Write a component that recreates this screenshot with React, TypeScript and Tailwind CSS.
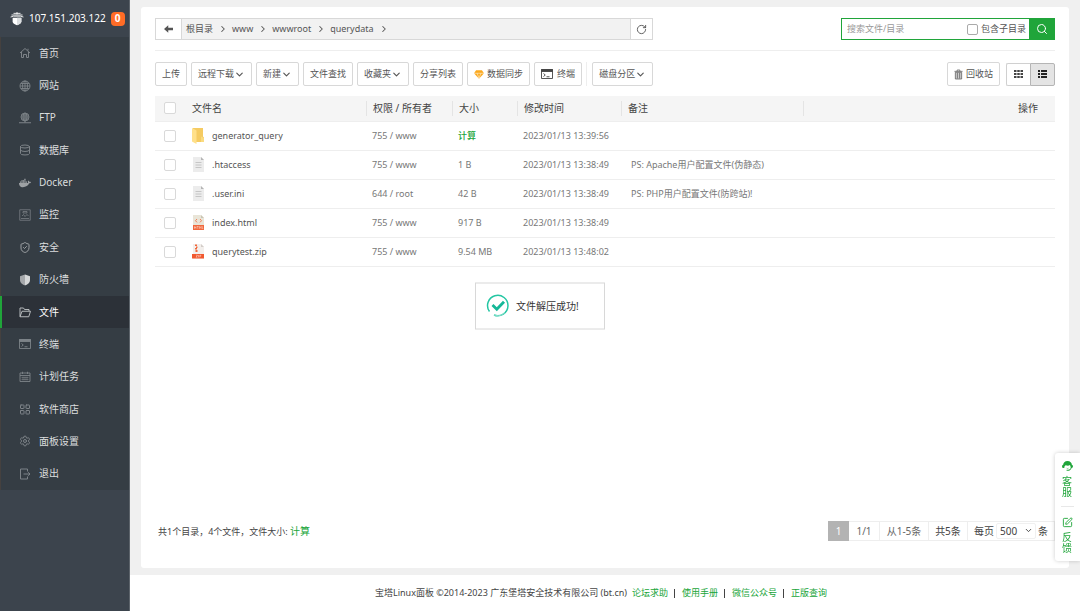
import React, { useState } from 'react'
import {
  ChevronDown,
  ChevronRight,
  Database,
  LayoutGrid,
  RotateCw,
  Search,
  Settings,
  ShieldCheck,
  SquarePen,
} from 'lucide-react'
import { FaDocker } from 'react-icons/fa'

const LogoIcon = () => (
  <svg viewBox="0 0 24 24" className="h-[15px] w-[14px] shrink-0" fill="none" stroke="#fff">
    <path d="M12 1v4M6 3.200h12M2.500 6h19M1 9.500l5-1.500h12l5 1.500" strokeWidth="1.500" />
    <path d="M4.500 10.500h15v6.500c0 3-3.500 5-7.500 6.500-4-1.500-7.500-3.500-7.500-6.500z" fill="#fff" stroke="none" />
    <path d="M12 10.500h7.500v6.500c0 3-3.500 5-7.500 6.500z" fill="#dcdfe1" stroke="none" />
  </svg>
)

const HomeIcon = () => (
  <svg viewBox="0 0 24 24" className="size-3" fill="none" stroke="currentColor" strokeWidth="2">
    <path d="M2 12L12 3l10 9M5 10v11h4v-6h6v6h4V10M18 7V3.500" />
  </svg>
)

const SiteIcon = () => (
  <svg viewBox="0 0 24 24" className="size-3" fill="none" stroke="currentColor" strokeWidth="1.800">
    <circle cx="12" cy="12" r="10" />
    <ellipse cx="12" cy="12" rx="5" ry="10" />
    <path d="M12 2v20M2 12h20M4 7h16M4 17h16" />
  </svg>
)

const FtpIcon = () => (
  <svg viewBox="0 0 24 24" className="size-3" fill="none" stroke="currentColor" strokeWidth="1.800">
    <circle cx="12" cy="10" r="8" />
    <ellipse cx="12" cy="10" rx="4" ry="8" />
    <path d="M4 10h16M5 6h14M5 14h14M12 2v19" />
    <path d="M0 21.500h24M9 21.500h6" strokeWidth="2.200" />
  </svg>
)

const MonitorIcon = () => (
  <svg viewBox="0 0 24 24" className="size-3" fill="none" stroke="currentColor" strokeWidth="1.500">
    <path d="M1.500 1.500h21v21h-21zM4 19h16M6 14l3-3 3 4 4-4 3 3M8 5h8v3H8z" />
  </svg>
)

const FirewallIcon = () => (
  <svg viewBox="0 0 24 24" className="size-3">
    <path d="M12 1L2 4.500V12c0 6 5 9 10 11z" fill="#a5a8ab" />
    <path d="M12 1l10 3.500V12c0 6-5 9-10 11z" fill="#d5d7d8" />
  </svg>
)

const FolderIcon = () => (
  <svg viewBox="0 0 24 22" className="h-[11px] w-3" fill="none" stroke="#c3c6c8" strokeWidth="1.800">
    <path d="M2 19V2h7l2 3h9v3M2 19.500L6 8.500h17l-3.500 11z" />
  </svg>
)

const TerminalIcon = () => (
  <svg viewBox="0 0 24 20" className="h-[10px] w-3" fill="none" stroke="currentColor" strokeWidth="1.800">
    <path d="M1 1h22v18H1z" />
    <path d="M1 1h22v4H1z" fill="currentColor" />
    <path d="M5 9l3.500 3L5 15M11 15.500h6" />
  </svg>
)

const CronIcon = () => (
  <svg viewBox="0 0 24 24" className="size-3" fill="none" stroke="currentColor" strokeWidth="1.800">
    <path d="M2 4h20v17H2zM2 9h20M7 1.500V6M17 1.500V6" />
    <path d="M5 13h14M5 17h14M8 11v8M12 11v8M16 11v8" strokeWidth="1.200" />
  </svg>
)

const ExitIcon = () => (
  <svg viewBox="0 0 24 24" className="size-3" fill="none" stroke="currentColor" strokeWidth="2">
    <path d="M17 7V2H3v20h14v-5M9 12h13M18.500 8.500L22 12l-3.500 3.500" />
  </svg>
)

const ArrowLeftIcon = () => (
  <svg viewBox="0 0 20 16" className="h-2 w-[10px]" fill="#555">
    <path d="M0 8l8.500-7.500V5.500H18v5H8.500v5z" />
  </svg>
)

const DiamondIcon = () => (
  <svg viewBox="0 0 24 20" className="h-[9px] w-[10px]">
    <path d="M5 0h14l5 7-12 13L0 7z" fill="#fca91d" />
    <path d="M0 7h24M7.500 7L12 19l4.500-12" stroke="#fff" strokeWidth="1.200" fill="none" />
  </svg>
)

const TrashIcon = () => (
  <svg viewBox="0 0 20 24" className="h-[11px] w-[9px]" fill="none" stroke="#666" strokeWidth="1.800">
    <path d="M1 5h18M7 5V2h6v3" />
    <path d="M3 7h14v15H3z" fill="#ccc" />
    <path d="M7.500 8v13M12.500 8v13" />
  </svg>
)

const GridViewIcon = () => (
  <svg viewBox="0 0 9 8" className="h-2 w-[9px]" fill="#444">
    <path d="M0 0h2.500v2H0zM3.250 0h2.500v2h-2.500zM6.500 0H9v2H6.500zM0 3h2.500v2H0zM3.250 3h2.500v2h-2.500zM6.500 3H9v2H6.500zM0 6h2.500v2H0zM3.250 6h2.500v2h-2.500zM6.500 6H9v2H6.500z" />
  </svg>
)

const ListViewIcon = () => (
  <svg viewBox="0 0 9 8" className="h-2 w-[9px]" fill="#222">
    <path d="M0 0h2v2H0zM3 0h6v2H3zM0 3h2v2H0zM3 3h6v2H3zM0 6h2v2H0zM3 6h6v2H3z" />
  </svg>
)

const ServiceIcon = () => (
  <svg viewBox="0 0 24 22" className="h-[10px] w-[11px]" fill="#20a53a">
    <path d="M12 0C6 0 2.500 4 2.500 8.500 1 9 0 10 0 12s1.500 3.500 3.500 3.500H5c0-3 1-5 3-6 4 1.500 7 1.500 9-.5 1.500 1.500 2 3.500 2 6.500-1 2.500-3 3.500-5 4h-4v2h4.500c3-.5 5.500-3 6.500-6 2-.5 3-2 3-4s-1-3-2.500-3.500C21.500 4 18 0 12 0z" />
    <path d="M8 14.500c2 1.500 6 1.500 8 0-1 2.500-7 2.500-8 0z" />
  </svg>
)

const SuccessIcon = () => (
  <svg viewBox="0 0 24 24" className="size-6" fill="none">
    <path d="M3.500 18A10.200 10.200 0 1 1 8 21.500" stroke="#24c6a3" strokeWidth="1.500" />
    <path d="M8 21.500c4 1.500 8 .5 11-2.500" stroke="#8fe2d0" strokeWidth="1" />
    <path d="M6.500 11.500l4.300 4.300 7.200-7.600" stroke="#16b898" strokeWidth="2.800" />
  </svg>
)

const FileIcon = ({ type }: { type: string }) => {
  if (type === 'folder') {
    return (
      <svg viewBox="0 0 12 17" className="h-[17px] w-3">
        <path d="M1 1h10v8.500l1 1V15H1z" fill="#f5cb62" />
        <path d="M0 1l4.500 2.500V17L0 14.500z" fill="#ffe08a" />
        <path d="M9 9.500L12 11v4H9z" fill="#fadb80" />
      </svg>
    )
  }
  if (type === 'html') {
    return (
      <svg viewBox="0 0 12 15" className="h-[15px] w-3">
        <path d="M1 0h8l3 3v12H1z" fill="#e9e5d8" />
        <path d="M9 0v3h3z" fill="#c9c5b5" />
        <path d="M5 4L3.500 5.700 5 7.400M8 4l1.500 1.700L8 7.400" fill="none" stroke="#f1683c" strokeWidth=".8" />
        <path d="M1 10h11v5H1z" fill="#f1683c" />
        <path d="M2.500 11.200v2.600M4 11.200v2.600M2.500 12.500H4M5 11.500h1.600M5.800 11.500v2.300M7.500 13.800v-2.300l.8 1 .8-1v2.300M10.300 11.200v2.400h1" fill="none" stroke="#fff" strokeWidth=".4" />
      </svg>
    )
  }
  if (type === 'zip') {
    return (
      <svg viewBox="0 0 12 15" className="h-[15px] w-3">
        <path d="M1 0h8l3 3v12H1z" fill="#f3efec" />
        <path d="M9 0v3h3z" fill="#d3cdc9" />
        <path d="M3 .5h2v1.500H3zM4 2.500h1.500v1.500H4zM3 4h2v1.500H3zM3.500 6h2v2h-2z" fill="#f1683c" />
        <path d="M0 10h12v4.500H0z" fill="#f1582f" />
        <path d="M4 11.200h1.500L4 13.200h1.500M6.500 11v2.400M7.800 13.400v-2.200h1v1h-1" fill="none" stroke="#fff" strokeWidth=".4" />
      </svg>
    )
  }
  return (
    <svg viewBox="0 0 12 15" className="h-[15px] w-3">
      <path d="M1 0h8l3 3v12H1z" fill="#ececec" />
      <path d="M9 0v3h3z" fill="#b5b5b5" />
      <path d="M3.500 5.500h6M3.500 8h6M3.500 10.500h6" stroke="#bdbdbd" strokeWidth=".8" />
    </svg>
  )
}

const menuItems = [
  { name: '首页', icon: <HomeIcon /> },
  { name: '网站', icon: <SiteIcon /> },
  { name: 'FTP', icon: <FtpIcon /> },
  { name: '数据库', icon: <Database className="size-3" /> },
  { name: 'Docker', icon: <FaDocker className="size-3 text-[#9da1a4]" /> },
  { name: '监控', icon: <MonitorIcon /> },
  { name: '安全', icon: <ShieldCheck className="size-[13px] text-[#9da1a4]" /> },
  { name: '防火墙', icon: <FirewallIcon /> },
  { name: '文件', icon: <FolderIcon />, active: true },
  { name: '终端', icon: <TerminalIcon /> },
  { name: '计划任务', icon: <CronIcon /> },
  { name: '软件商店', icon: <LayoutGrid className="size-[13px]" /> },
  { name: '面板设置', icon: <Settings className="size-3" /> },
  { name: '退出', icon: <ExitIcon /> },
]

interface FileRow {
  name: string
  type: string
  auth: string
  size?: string
  time: string
  ps?: string
}

const files: FileRow[] = [
  { name: 'generator_query', type: 'folder', auth: '755 / www', time: '2023/01/13 13:39:56' },
  { name: '.htaccess', type: 'text', auth: '755 / www', size: '1 B', time: '2023/01/13 13:38:49', ps: 'PS: Apache用户配置文件(伪静态)' },
  { name: '.user.ini', type: 'text', auth: '644 / root', size: '42 B', time: '2023/01/13 13:38:49', ps: 'PS: PHP用户配置文件(防跨站)!' },
  { name: 'index.html', type: 'html', auth: '755 / www', size: '917 B', time: '2023/01/13 13:38:49' },
  { name: 'querytest.zip', type: 'zip', auth: '755 / www', size: '9.54 MB', time: '2023/01/13 13:48:02' },
]

const paths = ['根目录', 'www', 'wwwroot', 'querydata']
const footerLinks = ['论坛求助', '使用手册', '微信公众号', '正版查询']

const ToolButton = ({ children, arrow }: { children: React.ReactNode; arrow?: boolean }) => (
  <button className="flex h-6 shrink-0 items-center rounded-[2px] border border-[#d8d8d8] bg-white px-[6px] text-[9px] text-[#555] hover:bg-gray-50">
    {children}
    {arrow && <ChevronDown className="size-[11px]" strokeWidth={2.5} />}
  </button>
)

const CheckBox = ({ label }: { label: string }) => (
  <input
    type="checkbox"
    aria-label={label}
    className="block size-3 appearance-none rounded-[2px] border border-[#d9d9d9] bg-white checked:bg-[#20a53a]"
  />
)

const HeadCell = ({ children }: { children: React.ReactNode }) => (
  <th className="p-0 text-left font-normal">
    <div className="h-[15px] border-l border-[#e4e4e4] pl-[6px] leading-[15px]">{children}</div>
  </th>
)

const Sidebar = () => (
  <aside className="w-[130px] shrink-0 border-r border-[#5d646b] bg-[#3c444d]">
    <div className="flex h-[37px] items-center pl-[10px] text-[10px] text-white">
      <LogoIcon />
      <span className="ml-[5px]">107.151.203.122</span>
      <span className="ml-[5px] flex size-[14px] items-center justify-center rounded-[4px] bg-[#ff6c26] text-[10px] font-bold">0</span>
    </div>
    <nav>
      <ul className="grid h-[453px] auto-rows-fr bg-[#353d44]">
        {menuItems.map((item) => (
          <li key={item.name} className="flex">
            <a
              href="#"
              className={
                item.active
                  ? 'flex flex-1 items-center gap-2 border-l-2 border-[#20a53a] bg-[#2c3138] pl-[17px] text-[10px] text-white'
                  : 'flex flex-1 items-center gap-2 border-l border-[#45413f] pl-[18px] text-[10px] text-[#dcdddf]'
              }
            >
              <span className="flex w-3 justify-center text-[#7d8388]">{item.icon}</span>
              {item.name}
            </a>
          </li>
        ))}
      </ul>
    </nav>
  </aside>
)

const PathBar = () => (
  <div className="flex items-center justify-between border-b border-[#eee] pb-[10px]">
    <div className="flex h-[22px] w-[498px] border border-[#d8d8d8] text-[9px] text-[#555]">
      <button aria-label="返回" className="flex w-[26px] items-center justify-center border-r border-[#d8d8d8]">
        <ArrowLeftIcon />
      </button>
      <div className="flex flex-1 items-center bg-[#f2f2f2] pl-1">
        {paths.map((path) => (
          <React.Fragment key={path}>
            <a href="#">{path}</a>
            <ChevronRight className="mr-1 ml-[5px] size-[10px]" strokeWidth={2.5} />
          </React.Fragment>
        ))}
      </div>
      <button aria-label="刷新" className="flex w-[22px] items-center justify-center border-l border-[#d8d8d8]">
        <RotateCw className="size-[11px]" />
      </button>
    </div>
    <div className="flex h-[22px] w-[214px] items-center border border-[#20a53a] bg-white text-[9px]">
      <input type="text" aria-label="搜索" placeholder="搜索文件/目录" className="min-w-0 flex-1 pl-[5px] outline-none placeholder:text-[#999]" />
      <label className="flex items-center gap-[3px] pr-[3px] text-[#555]">
        <input type="checkbox" className="size-[11px] appearance-none rounded-[2px] border border-[#aaa] bg-white checked:bg-[#20a53a]" />
        包含子目录
      </label>
      <button aria-label="搜索" className="flex w-[25px] items-center justify-center self-stretch bg-[#20a53a] text-white">
        <Search className="size-3" />
      </button>
    </div>
  </div>
)

const Toolbar = () => (
  <div className="mt-[11px] flex items-center justify-between">
    <div className="flex items-center gap-1">
      <ToolButton>上传</ToolButton>
      <ToolButton arrow>远程下载</ToolButton>
      <ToolButton arrow>新建</ToolButton>
      <ToolButton>文件查找</ToolButton>
      <ToolButton arrow>收藏夹</ToolButton>
      <ToolButton>分享列表</ToolButton>
      <ToolButton>
        <DiamondIcon />
        <span className="ml-[3px]">数据同步</span>
      </ToolButton>
      <ToolButton>
        <span className="text-[#444]"><TerminalIcon /></span>
        <span className="ml-1">终端</span>
      </ToolButton>
      <span className="mr-px h-6 w-px bg-[#eee]" />
      <ToolButton arrow>磁盘分区</ToolButton>
    </div>
    <div className="flex items-center gap-[6px]">
      <ToolButton>
        <TrashIcon />
        <span className="ml-[3px]">回收站</span>
      </ToolButton>
      <div className="flex h-[23px]">
        <button aria-label="图标视图" className="flex w-6 items-center justify-center rounded-l-[2px] border border-r-0 border-[#d0d0d0]">
          <GridViewIcon />
        </button>
        <button aria-label="列表视图" className="flex w-[25px] items-center justify-center rounded-r-[2px] border border-[#b5b5b5] bg-[#e4e4e4]">
          <ListViewIcon />
        </button>
      </div>
    </div>
  </div>
)

const FileTable = () => (
  <table className="mt-[10px] w-full table-fixed border-collapse text-[9px] text-[#777]">
    <colgroup>
      <col className="w-[37px]" />
      <col className="w-[174px]" />
      <col className="w-[86px]" />
      <col className="w-[65px]" />
      <col className="w-[104px]" />
      <col className="w-[182px]" />
      <col />
    </colgroup>
    <thead>
      <tr className="h-[25px] border-b border-[#eee] bg-[#f5f5f5] text-[10px] text-[#444]">
        <th className="p-0 pl-[9px]"><CheckBox label="全选" /></th>
        <th className="p-0 text-left font-normal">文件名</th>
        <HeadCell>权限 / 所有者</HeadCell>
        <HeadCell>大小</HeadCell>
        <HeadCell>修改时间</HeadCell>
        <HeadCell>备注</HeadCell>
        <th className="p-0 text-right font-normal">
          <div className="h-[15px] border-l border-[#e4e4e4] pr-[17px] leading-[15px]">操作</div>
        </th>
      </tr>
    </thead>
    <tbody>
      {files.map((file) => (
        <tr key={file.name} className="h-[29px] border-b border-[#eee] hover:bg-gray-50">
          <td className="p-0 pl-[9px]"><CheckBox label={file.name} /></td>
          <td className="p-0">
            <a href="#" className="flex items-center gap-2 text-[#555]">
              <FileIcon type={file.type} />
              {file.name}
            </a>
          </td>
          <td className="p-0 pl-[6px]">{file.auth}</td>
          <td className="p-0 pl-[6px]">
            {file.size || <button className="font-medium text-[#20a53a]">计算</button>}
          </td>
          <td className="p-0 pl-[6px]">{file.time}</td>
          <td className="p-0 pl-[10px]">{file.ps}</td>
          <td className="p-0"></td>
        </tr>
      ))}
    </tbody>
  </table>
)

const Pagination = () => {
  const [pageSize, setPageSize] = useState('500')
  return (
    <div className="flex h-5 items-stretch border-y border-r border-[#eee] text-[10px] text-[#444]">
      <span className="-my-px flex w-[21px] items-center justify-center bg-[#b3b3b3] text-white">1</span>
      <span className="flex w-[30px] items-center justify-center text-[#666]">1/1</span>
      <span className="flex w-[49px] items-center justify-center border-l border-[#eee] text-[#666]">从1-5条</span>
      <span className="flex w-[39px] items-center justify-center border-l border-[#eee]">共5条</span>
      <label className="flex items-center gap-[2px] border-l border-[#eee] px-[6px]">
        每页
        <span className="relative flex">
          <select
            value={pageSize}
            onChange={(e) => setPageSize(e.target.value)}
            className="h-4 w-10 appearance-none rounded-[2px] border border-[#f0f0f0] bg-white pl-[3px] leading-[14px]"
          >
            <option>100</option>
            <option>200</option>
            <option>500</option>
          </select>
          <ChevronDown className="pointer-events-none absolute right-[3px] top-[3px] size-[9px]" strokeWidth={2.5} />
        </span>
        条
      </label>
    </div>
  )
}

const Support = () => (
  <div className="fixed right-0 bottom-[50px] flex w-[25px] flex-col items-center rounded-l-[3px] bg-white pt-2 pb-[7px] text-[10px] leading-[11px] text-[#20a53a] shadow-[0_0_4px_rgba(0,0,0,0.2)]">
    <a href="#" className="flex w-[11px] flex-col items-center gap-[5px]">
      <ServiceIcon />
      <span>客服</span>
    </a>
    <span className="mt-2 mb-[10px] h-px w-[13px] bg-[#e8e8e8]" />
    <a href="#" className="flex w-[11px] flex-col items-center gap-1">
      <SquarePen className="size-[11px]" />
      <span>反馈</span>
    </a>
  </div>
)

const App = () => {
  return (
    <div className="flex min-h-screen bg-[#f0f0f0] font-['Noto_Sans','Noto_Sans_CJK_SC',sans-serif] leading-normal">
      <Sidebar />
      <div className="flex min-w-0 flex-1 flex-col">
        <main className="mx-[11px] mt-[7px] mb-[7px] flex flex-1 flex-col rounded-[3px] bg-white px-[14px] pt-[11px] pb-[27px]">
          <PathBar />
          <Toolbar />
          <FileTable />
          <div className="mt-auto flex items-center justify-between">
            <p className="pl-[3px] text-[9px] text-[#444]">
              共1个目录，4个文件，文件大小: <a href="#" className="text-[10px] text-[#20a53a]">计算</a>
            </p>
            <Pagination />
          </div>
        </main>
        <footer className="flex h-9 items-center justify-center bg-white pr-2 text-[9px] text-[#444]">
          <span className="mr-[5px]">宝塔Linux面板 ©2014-2023 广东堡塔安全技术有限公司 (bt.cn)</span>
          {footerLinks.map((link, i) => (
            <React.Fragment key={link}>
              {i > 0 && <span className="mr-[7px] ml-[6px] h-[9px] w-px bg-[#444]" />}
              <a href="#" className="text-[#20a53a]">{link}</a>
            </React.Fragment>
          ))}
        </footer>
      </div>
      <Support />
      <div role="status" className="fixed top-1/2 left-1/2 flex h-[47px] w-[130px] -translate-x-1/2 -translate-y-1/2 items-center gap-[6px] border border-[#d8d8d8] bg-white pl-[10px] text-[10px] text-[#333]">
        <SuccessIcon />
        文件解压成功!
      </div>
    </div>
  )
}

export default App
